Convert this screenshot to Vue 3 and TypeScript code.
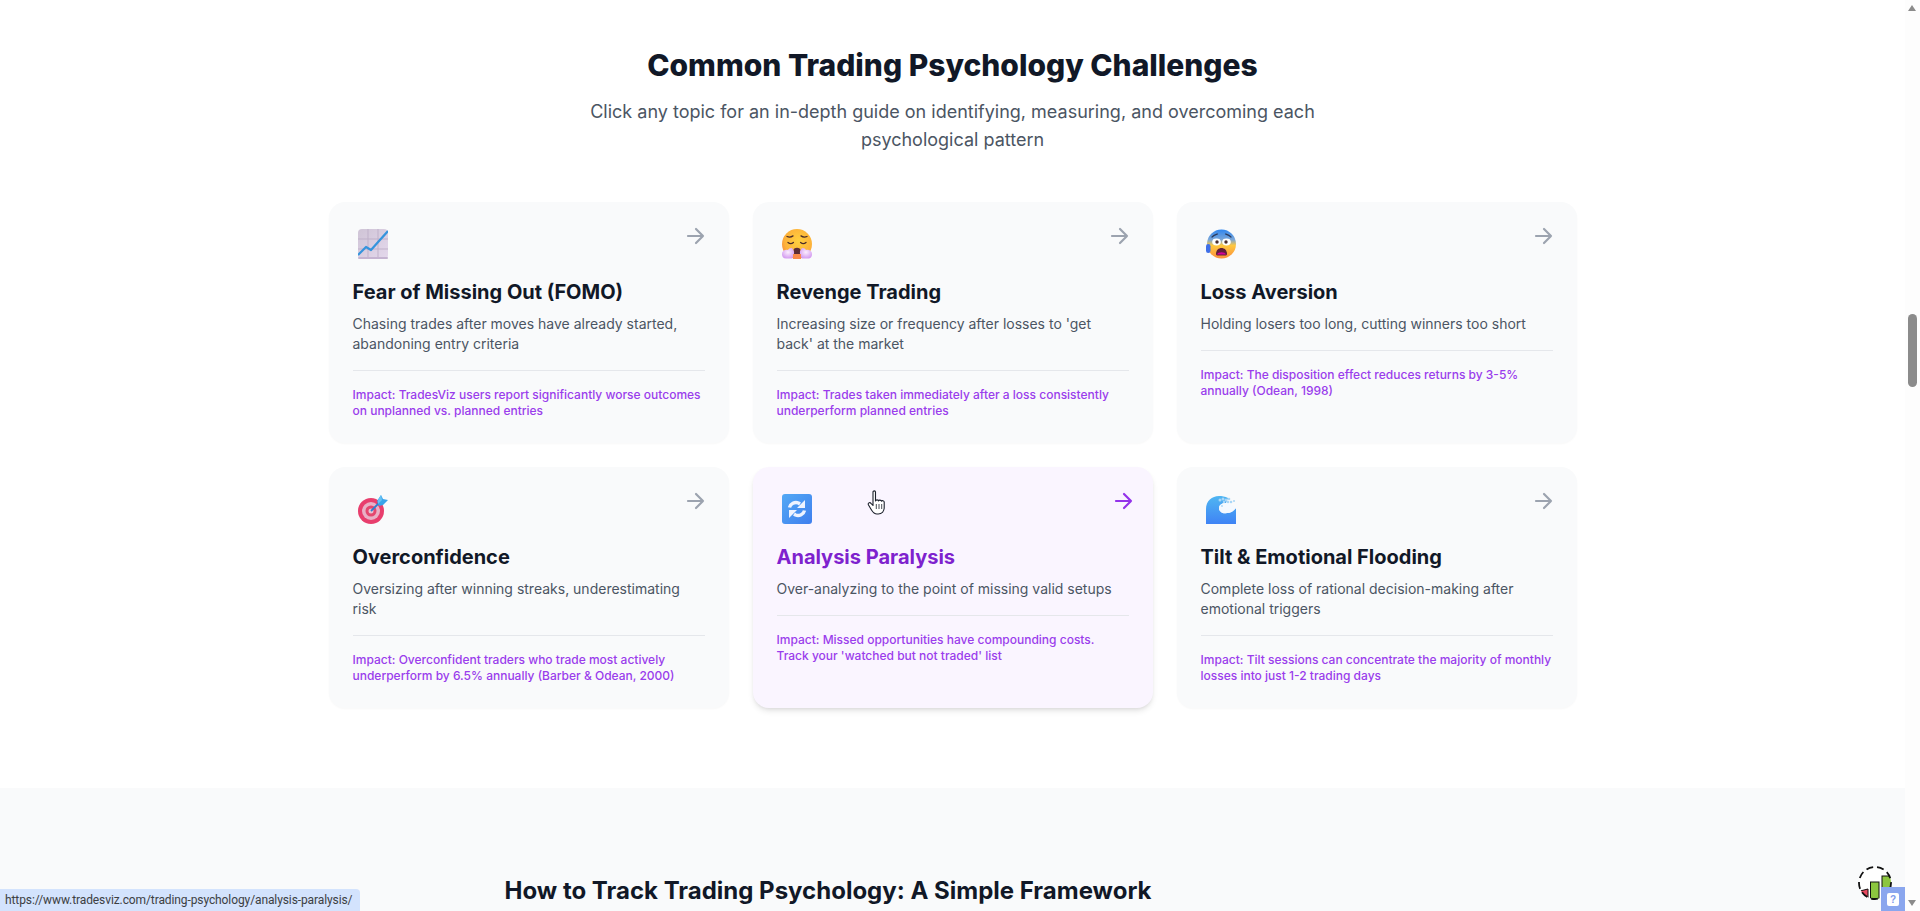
<script setup lang="ts">
interface Topic {
  icon: string;
  title: string;
  desc: string;
  impact: string;
  active?: boolean;
}

const topics: Topic[] = [
  {
    icon: 'chart',
    title: 'Fear of Missing Out (FOMO)',
    desc: 'Chasing trades after moves have already started, abandoning entry criteria',
    impact: 'Impact: TradesViz users report significantly worse outcomes on unplanned vs. planned entries',
  },
  {
    icon: 'steam',
    title: 'Revenge Trading',
    desc: "Increasing size or frequency after losses to 'get back' at the market",
    impact: 'Impact: Trades taken immediately after a loss consistently underperform planned entries',
  },
  {
    icon: 'fear',
    title: 'Loss Aversion',
    desc: 'Holding losers too long, cutting winners too short',
    impact: 'Impact: The disposition effect reduces returns by 3-5% annually (Odean, 1998)',
  },
  {
    icon: 'target',
    title: 'Overconfidence',
    desc: 'Oversizing after winning streaks, underestimating risk',
    impact: 'Impact: Overconfident traders who trade most actively underperform by 6.5% annually (Barber & Odean, 2000)',
  },
  {
    icon: 'cycle',
    title: 'Analysis Paralysis',
    desc: 'Over-analyzing to the point of missing valid setups',
    impact: "Impact: Missed opportunities have compounding costs. Track your 'watched but not traded' list",
    active: true,
  },
  {
    icon: 'wave',
    title: 'Tilt & Emotional Flooding',
    desc: 'Complete loss of rational decision-making after emotional triggers',
    impact: 'Impact: Tilt sessions can concentrate the majority of monthly losses into just 1-2 trading days',
  },
];
</script>

<template>
  <div class="window">
    <main class="page">
      <section class="challenges">
        <h2 class="heading">Common Trading Psychology Challenges</h2>
        <p class="lead">Click any topic for an in-depth guide on identifying, measuring, and overcoming each psychological pattern</p>
        <div class="grid">
          <a v-for="t in topics" :key="t.title" class="card" :class="{ active: t.active }">
            <svg class="arrow" viewBox="0 0 24 24" fill="none" stroke="currentColor" stroke-width="2.2" stroke-linecap="round" stroke-linejoin="round">
              <path d="M13 5l7 7-7 7M20 12H5" />
            </svg>

            <svg v-if="t.icon === 'chart'" class="emoji" viewBox="0 0 30 30">
              <defs>
                <linearGradient id="chartBg" x1="0" y1="0" x2="1" y2="1">
                  <stop offset="0" stop-color="#cfc4d6" />
                  <stop offset="1" stop-color="#e4d8ec" />
                </linearGradient>
              </defs>
              <rect width="30" height="30" rx="4" fill="url(#chartBg)" />
              <path d="M10 0v30M20 0v30M0 10h30M0 20h30" stroke="#bfb1c9" stroke-width="1" fill="none" />
              <path d="M1 29h28" stroke="#c5b4d1" stroke-width="2" stroke-linecap="round" />
              <path d="M0 26l8-8 5 3 8-9 9-10" stroke="#3594dd" stroke-width="2.2" fill="none" stroke-linejoin="round" />
            </svg>

            <svg v-else-if="t.icon === 'steam'" class="emoji" viewBox="0 0 30 30">
              <defs>
                <radialGradient id="steamFace" cx="0.55" cy="0.4" r="0.65">
                  <stop offset="0" stop-color="#ffd13f" />
                  <stop offset="0.7" stop-color="#fdb23a" />
                  <stop offset="1" stop-color="#f58a3c" />
                </radialGradient>
                <radialGradient id="puff" cx="0.5" cy="0.4" r="0.6">
                  <stop offset="0" stop-color="#fbeefe" />
                  <stop offset="1" stop-color="#d49cf0" />
                </radialGradient>
              </defs>
              <circle cx="15" cy="15" r="15" fill="url(#steamFace)" />
              <path d="M5 7.500c2 .8 4 .8 6-.6M25 7.500c-2 .8-4 .8-6-.6M6 13.500c1.600 1.400 3.800 1.400 5.400 0M18.600 13.500c1.600 1.400 3.800 1.400 5.400 0" stroke="#4a2c2a" stroke-width="1.300" fill="none" stroke-linecap="round" />
              <path d="M11.500 21c.6-3 6.400-3 7 0v6h-7z" fill="#5c2c35" />
              <path d="M0 25c0-3 3-5 6-4 1-2 4-3 5-.5 2 2 1 7-1 9H4c-3 0-4-2-4-4.500z" fill="url(#puff)" />
              <path d="M30 25c0-3-3-5-6-4-1-2-4-3-5-.5-2 2-1 7 1 9h6c3 0 4-2 4-4.500z" fill="url(#puff)" />
              <rect x="11" y="25" width="8" height="5" fill="#f8894a" />
            </svg>

            <svg v-else-if="t.icon === 'fear'" class="emoji" viewBox="0 0 30 30">
              <defs>
                <linearGradient id="fearFace" x1="0" y1="0" x2="0" y2="1">
                  <stop offset="0" stop-color="#2f86ef" />
                  <stop offset="0.35" stop-color="#7aa6d8" />
                  <stop offset="0.55" stop-color="#ffc83f" />
                  <stop offset="1" stop-color="#fb8f3c" />
                </linearGradient>
              </defs>
              <circle cx="15.500" cy="15" r="14.500" fill="url(#fearFace)" />
              <path d="M6 8c2-2 4-2.500 5.500-3M25 8c-2-2-4-2.500-5.500-3" stroke="#2c3a5a" stroke-width="1.200" fill="none" stroke-linecap="round" />
              <ellipse cx="10.500" cy="13" rx="4.300" ry="3.400" fill="#fff" />
              <ellipse cx="20.500" cy="13" rx="4.300" ry="3.400" fill="#fff" />
              <circle cx="11" cy="13" r="1.700" fill="#4a2d2d" />
              <circle cx="20" cy="13" r="1.700" fill="#4a2d2d" />
              <path d="M10 25c0-8 11-8 11 0 0 1-1 1.500-2 1.500h-7c-1 0-2-.5-2-1.500z" fill="#5f1e3a" />
              <path d="M11 25.500c1-3 8-3 9 0z" fill="#d3009a" />
              <rect x="0" y="15" width="4.500" height="9" rx="2.200" fill="#3f6fe8" />
            </svg>

            <svg v-else-if="t.icon === 'target'" class="emoji" viewBox="0 0 30 30">
              <circle cx="13" cy="17" r="13" fill="#e83e6d" />
              <circle cx="13" cy="17" r="9" fill="#e9b0c6" />
              <circle cx="13" cy="17" r="5.500" fill="#e4476f" />
              <circle cx="13" cy="17" r="2.500" fill="#e7c3d1" />
              <path d="M13 17L24 6" stroke="#2a7fd0" stroke-width="1.800" />
              <path d="M19 7l4-6 2 4 5 1-5 5-4 1z" fill="#3aa4ea" />
              <path d="M20 6l3-5 1 5-4 4z" fill="#66c2f4" />
            </svg>

            <svg v-else-if="t.icon === 'cycle'" class="emoji" viewBox="0 0 30 30">
              <defs>
                <linearGradient id="cycleBg" x1="0" y1="0" x2="1" y2="1">
                  <stop offset="0" stop-color="#53a9f5" />
                  <stop offset="1" stop-color="#3f7fee" />
                </linearGradient>
              </defs>
              <rect width="30" height="30" rx="3" fill="url(#cycleBg)" />
              <path d="M7.500 13.500c.8-3.800 5.200-6 9-4.500l1.500 1" stroke="#eef3ff" stroke-width="3.400" fill="none" />
              <path d="M23 6v8h-8z" fill="#eef3ff" />
              <path d="M22.500 16.500c-.8 3.800-5.200 6-9 4.500l-1.500-1" stroke="#eef3ff" stroke-width="3.400" fill="none" />
              <path d="M7 24v-8h8z" fill="#eef3ff" />
            </svg>

            <svg v-else class="emoji wave" viewBox="0 0 30 30">
              <defs>
                <linearGradient id="waveBg" x1="0" y1="0" x2="0" y2="1">
                  <stop offset="0" stop-color="#4fb6f2" />
                  <stop offset="1" stop-color="#3f83f5" />
                </linearGradient>
              </defs>
              <path d="M0 30V15C0 7 6 2 13 2c3 0 6 .6 9 2l-2 5c-4 0-7 2-7 5 0 4 4 6 8 5 4 0 7-2 9-5v16z" fill="url(#waveBg)" />
              <path d="M20 9c-4 0-7 2-7 5 0 4 4 6 8 5 3 0 6-2 9-5-3-3-7-5-10-5z" fill="#f4f9ff" />
              <g fill="#a9d6f6">
                <circle cx="14" cy="6" r="1.500" />
                <circle cx="17" cy="5" r="1.500" />
                <circle cx="20" cy="6" r="1.500" />
                <circle cx="23" cy="5" r="1.300" />
                <circle cx="25" cy="8" r="1.300" />
                <circle cx="28" cy="7" r="1" />
                <circle cx="18" cy="8" r="1.200" />
                <circle cx="22" cy="8" r="1.200" />
                <circle cx="16" cy="12" r="0.900" />
              </g>
            </svg>

            <h3 class="title">{{ t.title }}</h3>
            <p class="desc">{{ t.desc }}</p>
            <p class="impact">{{ t.impact }}</p>
          </a>
        </div>
      </section>

      <section class="framework">
        <h2 class="framework-title">How to Track Trading Psychology: A Simple Framework</h2>
      </section>
    </main>

    <aside class="scrollbar">
      <span class="tri up"></span>
      <span class="thumb"></span>
      <span class="tri down"></span>
    </aside>

    <!-- things floating over the page -->
    <svg class="cursor" viewBox="0 0 20 26">
      <path
        d="M6 2c0-1.500 2.500-1.500 2.500 0v9c.2-1.500 3-1.500 3 0 .2-1.200 2.800-1.200 3 .3.400-1 2.700-.8 2.700 .8v5.400c0 3.500-2.200 6.500-6 6.500H10c-3 0-4-1.500-5.500-4L1.500 15c-1-1.800 1.200-3.200 2.500-1.700L6 15.500z"
        fill="#fff" stroke="#1a1f2b" stroke-width="1.100" stroke-linejoin="round"
      />
      <path d="M9.300 14v5M12 14v5M14.700 14v5" stroke="#1a1f2b" stroke-width="0.800" />
    </svg>

    <div class="status">https://www.tradesviz.com/trading-psychology/analysis-paralysis/</div>

    <div class="widget">
      <svg viewBox="0 0 34 34" width="34" height="34">
        <defs>
          <clipPath id="widgetClip"><circle cx="17" cy="17" r="16" /></clipPath>
        </defs>
        <circle cx="17" cy="17" r="16" fill="#fff" />
        <g clip-path="url(#widgetClip)" stroke="#111" stroke-width="1">
          <path d="M2 25l8-2v11H2z" fill="#e8485f" />
          <rect x="12.500" y="16" width="8.500" height="18" fill="#8cc63f" />
          <rect x="24" y="10" width="10" height="24" fill="#8cc63f" />
        </g>
        <circle cx="17" cy="17" r="16" fill="none" stroke="#111" stroke-width="1.800" stroke-dasharray="7 4" />
      </svg>
    </div>
    <div class="help"><span class="help-bubble">?</span></div>
  </div>
</template>

<style>
html,
body {
  margin: 0;
  overflow: hidden;
}
</style>

<style scoped>
.window {
  position: relative;
  display: flex;
  width: 1920px;
  height: 911px;
  overflow: hidden;
  background: #fff;
  font-family: Inter, "Liberation Sans", sans-serif;
}

.page {
  flex: 1;
  min-width: 0;
  overflow: hidden;
}

.challenges {
  padding: 47px 16px 80px;
  max-width: 1248px;
  margin: 0 auto;
}

.heading {
  margin: 0;
  font-size: 30px;
  line-height: 36px;
  font-weight: 800;
  color: #111827;
  text-align: center;
}

.lead {
  margin: 15px auto 48px;
  max-width: 768px;
  font-size: 18px;
  line-height: 28px;
  color: #4b5563;
  text-align: center;
}

.grid {
  display: grid;
  grid-template-columns: repeat(3, 1fr);
  gap: 24px;
}

.card {
  position: relative;
  display: block;
  padding: 24px;
  border-radius: 16px;
  background: #f9fafb;
  box-shadow: 0 1px 2px rgba(17, 24, 39, 0.03);
}

.card.active {
  background: #faf5ff;
  box-shadow: 0 4px 6px -1px rgba(0, 0, 0, 0.1), 0 2px 4px -2px rgba(0, 0, 0, 0.1);
}

.arrow {
  position: absolute;
  top: 22px;
  right: 22px;
  width: 24px;
  height: 24px;
  color: #9ca3af;
}

.card.active .arrow {
  color: #9333ea;
  transform: translateX(4px);
}

.emoji {
  display: block;
  width: 30px;
  height: 30px;
  margin: 3px 0 19px 5.5px;
}

.title {
  margin: 0 0 8px;
  font-size: 20px;
  line-height: 28px;
  font-weight: 700;
  color: #111827;
}

.card.active .title {
  color: #7e22ce;
}

.desc {
  margin: 0 0 16px;
  font-size: 14px;
  line-height: 20px;
  color: #4b5563;
}

.impact {
  margin: 0;
  padding-top: 16px;
  border-top: 1px solid #e5e7eb;
  font-size: 12px;
  line-height: 16px;
  font-weight: 500;
  color: #9a3dec;
}

.framework {
  background: #f9fafb;
  padding-top: 87px;
  height: 200px;
}

.framework-title {
  margin: 0 auto;
  width: 896px;
  font-size: 24px;
  line-height: 32px;
  font-weight: 700;
  color: #111827;
}

.scrollbar {
  position: relative;
  flex: none;
  width: 15px;
  background: #fdfdfd;
}

.thumb {
  position: absolute;
  top: 314px;
  left: 3px;
  width: 9px;
  height: 73px;
  border-radius: 5px;
  background: #8b8b8b;
}

.tri {
  position: absolute;
  left: 3px;
  width: 0;
  height: 0;
  border-left: 4.5px solid transparent;
  border-right: 4.5px solid transparent;
}

.tri.up {
  top: 5px;
  border-bottom: 6px solid #8b8b8b;
}

.tri.down {
  bottom: 5px;
  border-top: 6px solid #8b8b8b;
}

.cursor {
  position: absolute;
  left: 867px;
  top: 490px;
  width: 20px;
  height: 26px;
}

.status {
  position: absolute;
  left: 0;
  bottom: 0;
  height: 22px;
  width: 360px;
  box-sizing: border-box;
  padding: 0 0 0 5px;
  border-top-right-radius: 4px;
  background: #d3e3fd;
  font-family: Roboto, "Liberation Sans", sans-serif;
  font-size: 12px;
  letter-spacing: -0.1px;
  line-height: 22px;
  color: #3c4043;
  white-space: nowrap;
}

.widget {
  position: absolute;
  left: 1858px;
  top: 866px;
  width: 34px;
  height: 34px;
}

.help {
  position: absolute;
  left: 1881px;
  bottom: 0;
  width: 24px;
  height: 24px;
  background: #8aa6ee;
  display: flex;
  align-items: center;
  justify-content: center;
}

.help-bubble {
  width: 12px;
  height: 13px;
  border-radius: 2px;
  background: #fff;
  color: #7f9bea;
  font-family: "Liberation Sans", sans-serif;
  font-size: 10px;
  line-height: 13px;
  font-weight: 700;
  text-align: center;
}
</style>
